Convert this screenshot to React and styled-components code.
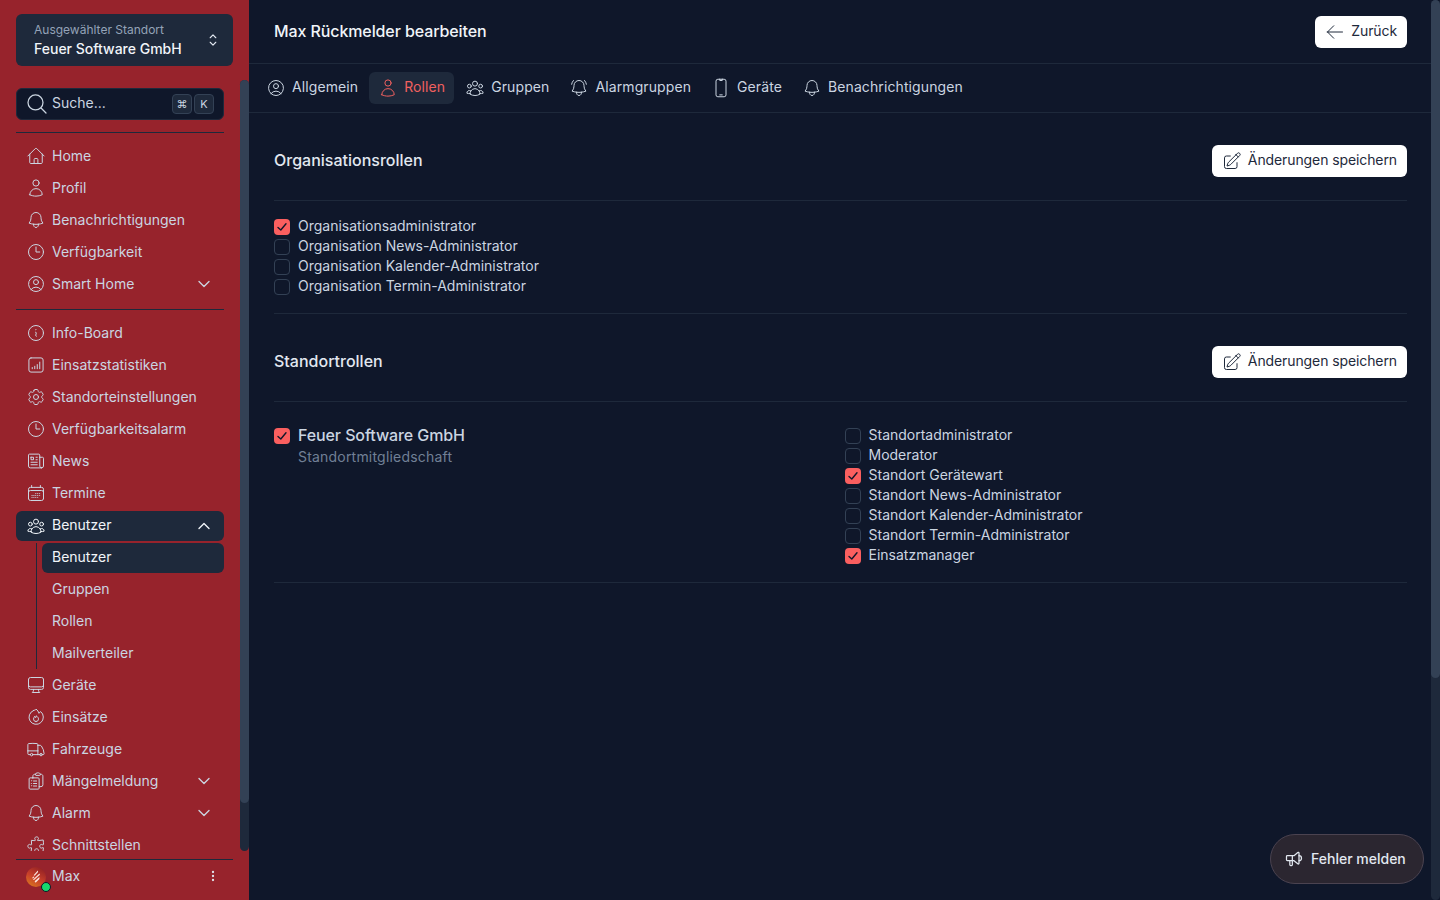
import React from 'react'
import styled, { createGlobalStyle } from 'styled-components'
import {
  HiOutlineHome, HiOutlineUser, HiOutlineBell, HiOutlineClock, HiOutlineUserCircle,
  HiOutlineInformationCircle, HiOutlineCog6Tooth, HiOutlineNewspaper, HiOutlineCalendarDays,
  HiOutlineUserGroup, HiOutlineComputerDesktop, HiOutlineTruck, HiOutlineClipboardDocumentList,
  HiOutlinePuzzlePiece, HiOutlineChevronDown, HiOutlineChevronUp, HiOutlineChevronUpDown,
  HiOutlineMagnifyingGlass, HiOutlineBellAlert, HiOutlineDevicePhoneMobile, HiOutlineArrowLeft,
  HiOutlinePencilSquare, HiOutlineEllipsisVertical,
} from 'react-icons/hi2'
import { TbSpeakerphone } from 'react-icons/tb'

const FONT = '"Inter", "Liberation Sans", sans-serif'

const GlobalStyle = createGlobalStyle`
  * { box-sizing: border-box; }
  html, body { margin: 0; height: 100%; overflow: hidden; }
  body { font-family: ${FONT}; background: #0f172a; color: #cbd5e1; }
  svg { stroke-width: 1.2; flex-shrink: 0; }
`

function StatsIcon() {
  return (
    <svg viewBox="0 0 24 24" width="20" height="20" fill="none" stroke="currentColor" strokeLinecap="round">
      <rect x="3.5" y="3.5" width="17" height="17" rx="2.5" />
      <path d="M7.5 16.5v-1.5M10.5 16.5v-3M13.5 16.5v-5M16.5 16.5v-8" />
    </svg>
  )
}

function FireIcon() {
  return (
    <svg viewBox="0 0 24 24" width="20" height="20" fill="none" stroke="currentColor" strokeLinecap="round" strokeLinejoin="round">
      <path d="M9 4.2A8.6 8.6 0 1 0 17.6 5.5L15.4 7.6C15 5.6 13.8 3.6 12 2.6 11.8 3.4 10.5 3.8 9 4.2Z" />
      <path d="M12 17.5a3 3 0 0 1-3-3c0-1.4 1-2 1.4-3.4.5.4 1 1 1.2 1.7.4-.7.7-1.4.6-2.2 1.8 1 2.8 2.4 2.8 3.9a3 3 0 0 1-3 3Z" />
    </svg>
  )
}

function FlameLogo() {
  return (
    <svg viewBox="0 0 20 20" width="20" height="20" style={{ strokeWidth: 0 }}>
      <defs>
        <linearGradient id="avatarFill" x1="0.8" y1="0" x2="0.2" y2="1">
          <stop offset="0" stopColor="#8f1f24" />
          <stop offset="0.55" stopColor="#c9402a" />
          <stop offset="1" stopColor="#d9781f" />
        </linearGradient>
      </defs>
      <circle cx="10" cy="10" r="10" fill="url(#avatarFill)" />
      <path d="M11.8 3.5 7.6 8.2l1.1.5 3.4-3.8ZM13.4 6.6 7 12.4l1 .6 6-5.2ZM13.4 10 8.6 14.2l1 1.6 3.8-3.8ZM7.2 9.4 6.2 11l.7.6 1.6-1.5Z" fill="#fbe6df" />
    </svg>
  )
}

function CheckMark() {
  return (
    <svg viewBox="0 0 16 16" width="16" height="16" fill="none" stroke="#0f172a" strokeLinecap="round" strokeLinejoin="round" style={{ strokeWidth: 1.4 }}>
      <path d="M4 8.5 6.8 11 12 4.8" />
    </svg>
  )
}

const topItems = [
  { icon: HiOutlineHome, label: 'Home' },
  { icon: HiOutlineUser, label: 'Profil' },
  { icon: HiOutlineBell, label: 'Benachrichtigungen' },
  { icon: HiOutlineClock, label: 'Verfügbarkeit' },
  { icon: HiOutlineUserCircle, label: 'Smart Home', chevron: 'down' },
]

const siteItems = [
  { icon: HiOutlineInformationCircle, label: 'Info-Board' },
  { icon: StatsIcon, label: 'Einsatzstatistiken' },
  { icon: HiOutlineCog6Tooth, label: 'Standorteinstellungen' },
  { icon: HiOutlineClock, label: 'Verfügbarkeitsalarm' },
  { icon: HiOutlineNewspaper, label: 'News' },
  { icon: HiOutlineCalendarDays, label: 'Termine' },
  { icon: HiOutlineUserGroup, label: 'Benutzer', chevron: 'up', open: true },
]

const lowerItems = [
  { icon: HiOutlineComputerDesktop, label: 'Geräte' },
  { icon: FireIcon, label: 'Einsätze' },
  { icon: HiOutlineTruck, label: 'Fahrzeuge' },
  { icon: HiOutlineClipboardDocumentList, label: 'Mängelmeldung', chevron: 'down' },
  { icon: HiOutlineBell, label: 'Alarm', chevron: 'down' },
  { icon: HiOutlinePuzzlePiece, label: 'Schnittstellen' },
]

const subItems = ['Benutzer', 'Gruppen', 'Rollen', 'Mailverteiler']

const tabs = [
  { icon: HiOutlineUserCircle, label: 'Allgemein' },
  { icon: HiOutlineUser, label: 'Rollen', active: true },
  { icon: HiOutlineUserGroup, label: 'Gruppen' },
  { icon: HiOutlineBellAlert, label: 'Alarmgruppen' },
  { icon: HiOutlineDevicePhoneMobile, label: 'Geräte' },
  { icon: HiOutlineBell, label: 'Benachrichtigungen' },
]

const orgRoles = [
  { label: 'Organisationsadministrator', checked: true },
  { label: 'Organisation News-Administrator' },
  { label: 'Organisation Kalender-Administrator' },
  { label: 'Organisation Termin-Administrator' },
]

const siteRoles = [
  { label: 'Standortadministrator' },
  { label: 'Moderator' },
  { label: 'Standort Gerätewart', checked: true },
  { label: 'Standort News-Administrator' },
  { label: 'Standort Kalender-Administrator' },
  { label: 'Standort Termin-Administrator' },
  { label: 'Einsatzmanager', checked: true },
]

function NavRow({ item }) {
  const Icon = item.icon
  return (
    <NavItem $open={item.open}>
      <Icon size={20} />
      <NavLabel $open={item.open}>{item.label}</NavLabel>
      {item.chevron === 'down' && <HiOutlineChevronDown size={16} style={{ strokeWidth: 2 }} />}
      {item.chevron === 'up' && <HiOutlineChevronUp size={16} style={{ strokeWidth: 2 }} />}
    </NavItem>
  )
}

function Check({ label, checked }) {
  return (
    <CheckRow>
      <Box $checked={checked}>{checked && <CheckMark />}</Box>
      <RaisedCaption>{label}</RaisedCaption>
    </CheckRow>
  )
}

function SaveButton() {
  return (
    <LightButton>
      <HiOutlinePencilSquare size={20} />
      <RaisedCaption>Änderungen speichern</RaisedCaption>
    </LightButton>
  )
}

export default function App() {
  return (
    <>
      <GlobalStyle />
      <Shell>
        <Sidebar>
          <SiteSelect>
            <div>
              <SiteLabel>Ausgewählter Standort</SiteLabel>
              <SiteName>Feuer Software GmbH</SiteName>
            </div>
            <HiOutlineChevronUpDown size={18} style={{ strokeWidth: 1.5 }} />
          </SiteSelect>
          <NavArea>
            <NavScroll>
              <Search>
                <HiOutlineMagnifyingGlass size={24} style={{ strokeWidth: 1.25 }} />
                <SearchText>Suche...</SearchText>
                <Kbd>⌘</Kbd>
                <Kbd>K</Kbd>
              </Search>
              <NavDivider $above={12} />
              {topItems.map(item => <NavRow key={item.label} item={item} />)}
              <NavDivider $above={9} />
              {siteItems.map(item => <NavRow key={item.label} item={item} />)}
              <SubList>
                {subItems.map((label, i) => (
                  <SubItem key={label} $active={i === 0}>
                    {i === 0 ? <RaisedCaption>{label}</RaisedCaption> : <Caption>{label}</Caption>}
                  </SubItem>
                ))}
              </SubList>
              {lowerItems.map(item => <NavRow key={item.label} item={item} />)}
            </NavScroll>
            <Rail><Thumb $height={723} /></Rail>
          </NavArea>
          <UserBar>
            <Avatar>
              <FlameLogo />
              <OnlineDot />
            </Avatar>
            <UserName>Max</UserName>
            <HiOutlineEllipsisVertical size={16} style={{ strokeWidth: 2, color: '#e2e8f0' }} />
          </UserBar>
        </Sidebar>

        <Main>
          <PageHeader>
            <PageTitle>Max Rückmelder bearbeiten</PageTitle>
            <LightButton>
              <HiOutlineArrowLeft size={20} />
              <Caption>Zurück</Caption>
            </LightButton>
          </PageHeader>
          <TabBar>
            {tabs.map(tab => (
              <Tab key={tab.label} $active={tab.active}>
                <tab.icon size={20} />
                <RaisedCaption>{tab.label}</RaisedCaption>
              </Tab>
            ))}
          </TabBar>

          <Section>
            <SectionHead>
              <SectionTitle>Organisationsrollen</SectionTitle>
              <SaveButton />
            </SectionHead>
            <SectionBody>
              {orgRoles.map(role => <Check key={role.label} {...role} />)}
            </SectionBody>
          </Section>

          <Section>
            <SectionHead>
              <SectionTitle>Standortrollen</SectionTitle>
              <SaveButton />
            </SectionHead>
            <SiteGrid>
              <SiteOwner>
                <Box $checked $top><CheckMark /></Box>
                <div>
                  <OwnerName>Feuer Software GmbH</OwnerName>
                  <OwnerHint>Standortmitgliedschaft</OwnerHint>
                </div>
              </SiteOwner>
              <div>
                {siteRoles.map(role => <Check key={role.label} {...role} />)}
              </div>
            </SiteGrid>
          </Section>
        </Main>
        <Rail><Thumb $height={678} /></Rail>
      </Shell>
      <ReportButton>
        <TbSpeakerphone size={20} style={{ strokeWidth: 1.5 }} />
        <Caption>Fehler melden</Caption>
      </ReportButton>
    </>
  )
}

const Shell = styled.div`
  display: flex;
  height: 100vh;
`

const Caption = styled.span`
  padding-bottom: 2px;
`

const RaisedCaption = styled.span`
  padding-bottom: 4px;
`

const Rail = styled.div`
  width: 9px;
  flex-shrink: 0;
  background: #1e293b;
  border-radius: 5px;
`

const Thumb = styled.div`
  height: ${p => p.$height}px;
  background: #334155;
  border-radius: 5px;
`

const Sidebar = styled.aside`
  width: 249px;
  flex-shrink: 0;
  display: flex;
  flex-direction: column;
  background: #97232c;
  padding-top: 14px;
`

const SiteSelect = styled.div`
  width: 217px;
  height: 52px;
  margin: 0 0 14px 16px;
  padding: 0 11px 0 18px;
  flex-shrink: 0;
  display: flex;
  align-items: center;
  justify-content: space-between;
  background: #1e293b;
  border-radius: 6px;
  color: #e2e8f0;
`

const SiteLabel = styled.div`
  font-size: 12px;
  line-height: 16px;
  color: #94a3b8;
`

const SiteName = styled.div`
  margin-top: 1px;
  font-size: 14px;
  line-height: 20px;
  font-weight: 500;
  color: #f1f5f9;
`

const NavArea = styled.div`
  flex: 1;
  min-height: 0;
  margin-bottom: 8px;
  display: flex;
`

const NavScroll = styled.nav`
  flex: 1;
  min-width: 0;
  padding: 8px 16px 0;
  overflow: hidden;
`

const Search = styled.div`
  height: 32px;
  padding: 0 9px 0 8px;
  display: flex;
  align-items: center;
  gap: 2px;
  background: #0f172a;
  border: 1px solid #1e293b;
  border-radius: 6px;
  font-size: 14px;
`

const SearchText = styled.span`
  flex: 1;
  padding: 0 0 4px 1px;
`

const Kbd = styled.kbd`
  width: 20px;
  height: 20px;
  display: flex;
  align-items: center;
  justify-content: center;
  background: #1e293b;
  border: 1px solid #334155;
  border-radius: 4px;
  font-family: ${FONT};
  font-size: 11px;
  color: #cbd5e1;
`

const NavDivider = styled.div`
  height: 1px;
  margin: ${p => p.$above}px 0 7px;
  background: #1e293b;
`

const NavItem = styled.div`
  height: ${p => (p.$open ? '30px' : '32px')};
  margin: ${p => (p.$open ? '2px 0 0' : '0')};
  padding: 0 12px 0 10px;
  display: flex;
  align-items: center;
  gap: 6px;
  font-size: 14px;
  border-radius: 6px;
  color: ${p => (p.$open ? '#f1f5f9' : '#cbd5e1')};
  background: ${p => (p.$open ? '#1e293b' : 'transparent')};
`

const NavLabel = styled.span`
  flex: 1;
  padding-bottom: ${p => (p.$open ? '4px' : '2px')};
`

const SubList = styled.div`
  margin-left: 20px;
  padding-left: 5px;
  border-left: 1px solid #1e293b;
`

const SubItem = styled.div`
  height: ${p => (p.$active ? '30px' : '32px')};
  margin: ${p => (p.$active ? '2px 0 0' : '0')};
  padding-left: 10px;
  display: flex;
  align-items: center;
  font-size: 14px;
  border-radius: 6px;
  color: ${p => (p.$active ? '#f1f5f9' : '#cbd5e1')};
  background: ${p => (p.$active ? '#1e293b' : 'transparent')};
`

const UserBar = styled.div`
  width: 217px;
  height: 41px;
  margin-left: 16px;
  padding: 0 12px 8px 10px;
  flex-shrink: 0;
  display: flex;
  align-items: center;
  gap: 6px;
  border-top: 1px solid #1e293b;
  font-size: 14px;
`

const Avatar = styled.div`
  position: relative;
  width: 20px;
  height: 20px;
  margin-top: 2px;
`

const OnlineDot = styled.span`
  position: absolute;
  right: -5px;
  bottom: -5px;
  width: 10px;
  height: 10px;
  background: #17d96e;
  border: 1px solid #0f172a;
  border-radius: 50%;
`

const UserName = styled.span`
  flex: 1;
  padding-bottom: 2px;
`

const Main = styled.main`
  flex: 1;
  min-width: 0;
`

const PageHeader = styled.header`
  height: 64px;
  padding: 0 24px 0 25px;
  display: flex;
  align-items: center;
  justify-content: space-between;
  border-bottom: 1px solid #1e293b;
`

const PageTitle = styled.h1`
  margin: 0 0 2px;
  font-size: 16px;
  line-height: 24px;
  font-weight: 500;
  letter-spacing: -0.1px;
  color: #f1f5f9;
`

const LightButton = styled.button`
  height: 32px;
  padding: 0 10px;
  display: flex;
  align-items: center;
  gap: 6px;
  background: #fff;
  border: 0;
  border-radius: 6px;
  font-family: ${FONT};
  font-size: 14px;
  letter-spacing: -0.1px;
  color: #1e293b;
`

const TabBar = styled.div`
  height: 49px;
  padding: 0 8px;
  display: flex;
  align-items: center;
  gap: 2px;
  border-bottom: 1px solid #1e293b;
`

const Tab = styled.div`
  height: 32px;
  padding: 0 9px;
  display: flex;
  align-items: center;
  gap: 6px;
  font-size: 14px;
  letter-spacing: 0.1px;
  border-radius: 6px;
  color: ${p => (p.$active ? '#f0605f' : '#cbd5e1')};
  background: ${p => (p.$active ? '#1e293b' : 'transparent')};
`

const Section = styled.section`
  margin: 0 24px 0 25px;
  border-bottom: 1px solid #1e293b;
`

const SectionHead = styled.div`
  height: 88px;
  padding-top: 32px;
  display: flex;
  align-items: flex-start;
  justify-content: space-between;
  border-bottom: 1px solid #1e293b;
`

const SectionTitle = styled.h2`
  margin: 0;
  font-size: 16px;
  line-height: 30px;
  font-weight: 500;
  color: #e2e8f0;
`

const SectionBody = styled.div`
  padding: 16px 0;
`

const CheckRow = styled.label`
  height: 20px;
  display: flex;
  align-items: center;
  gap: 8px;
  font-size: 14px;
  color: #cbd5e1;
`

const Box = styled.span`
  width: 16px;
  height: 16px;
  flex-shrink: 0;
  margin-top: ${p => (p.$top ? '2px' : '0')};
  border-radius: 4px;
  border: ${p => (p.$checked ? '0' : '1px solid #334155')};
  background: ${p => (p.$checked ? '#fa5f5f' : 'transparent')};
`

const SiteGrid = styled.div`
  padding: 24px 0 16px;
  display: grid;
  grid-template-columns: 1fr 1fr;
  gap: 8px;
`

const SiteOwner = styled.div`
  display: flex;
  align-items: flex-start;
  gap: 8px;
`

const OwnerName = styled.div`
  font-size: 16px;
  line-height: 18px;
  font-weight: 500;
  letter-spacing: -0.1px;
  color: #cbd5e1;
`

const OwnerHint = styled.div`
  margin-top: 3px;
  font-size: 14px;
  line-height: 20px;
  letter-spacing: 0.2px;
  color: #718096;
`

const ReportButton = styled.button`
  position: fixed;
  right: 16px;
  bottom: 16px;
  width: 154px;
  height: 50px;
  padding-left: 13px;
  display: flex;
  align-items: center;
  gap: 7px;
  background: #2b2630;
  border: 1px solid #4b4350;
  border-radius: 25px;
  font-family: ${FONT};
  font-size: 14px;
  font-weight: 500;
  color: #e2e8f0;
`
